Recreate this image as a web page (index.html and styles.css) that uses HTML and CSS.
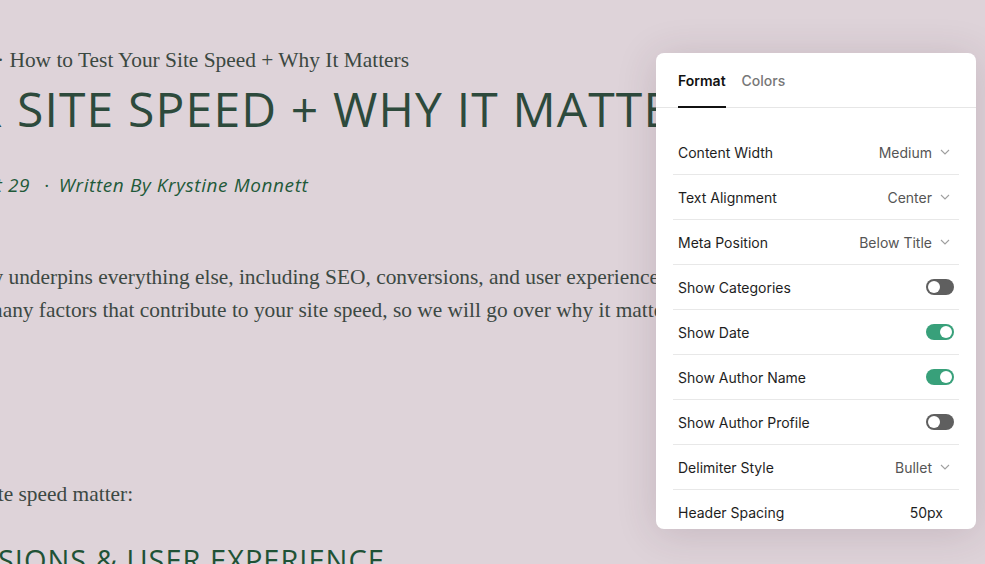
FILE: index.html
```html
<!DOCTYPE html>
<html lang="en">
<head>
<meta charset="utf-8">
<title>Blog post format</title>
<link rel="stylesheet" href="styles.css">
</head>
<body>
<main class="article">
  <div class="crumb">· How to Test Your Site Speed + Why It Matters</div>
  <h1 class="title">YOUR SITE SPEED + WHY IT MATTERS</h1>
  <div class="meta"><span>August 29</span><span class="dot">·</span><span>Written By Krystine Monnett</span></div>
  <div class="para">
    <div class="line l1">Site speed quietly underpins everything else, including SEO, conversions, and user experience. There are</div>
    <div class="line l2">many factors that contribute to your site speed, so we will go over why it matters and how to test it.</div>
  </div>
  <div class="para2">Why does site speed matter:</div>
  <h2 class="sub">CONVERSIONS &amp; USER EXPERIENCE</h2>
</main>

<aside class="panel">
  <div class="tabs">
    <div class="tab active">Format</div>
    <div class="tab">Colors</div>
  </div>
  <div class="rows">
    <div class="row"><span class="label">Content Width</span><span class="value">Medium<svg class="chev" viewBox="0 0 10 6" width="10" height="6"><path d="M1 1l4 4 4-4" fill="none" stroke="currentColor" stroke-width="1.1"/></svg></span></div>
    <div class="row"><span class="label">Text Alignment</span><span class="value">Center<svg class="chev" viewBox="0 0 10 6" width="10" height="6"><path d="M1 1l4 4 4-4" fill="none" stroke="currentColor" stroke-width="1.1"/></svg></span></div>
    <div class="row"><span class="label">Meta Position</span><span class="value">Below Title<svg class="chev" viewBox="0 0 10 6" width="10" height="6"><path d="M1 1l4 4 4-4" fill="none" stroke="currentColor" stroke-width="1.1"/></svg></span></div>
    <div class="row"><span class="label">Show Categories</span><span class="toggle"></span></div>
    <div class="row"><span class="label">Show Date</span><span class="toggle on"></span></div>
    <div class="row"><span class="label">Show Author Name</span><span class="toggle on"></span></div>
    <div class="row"><span class="label">Show Author Profile</span><span class="toggle"></span></div>
    <div class="row"><span class="label">Delimiter Style</span><span class="value">Bullet<svg class="chev" viewBox="0 0 10 6" width="10" height="6"><path d="M1 1l4 4 4-4" fill="none" stroke="currentColor" stroke-width="1.1"/></svg></span></div>
    <div class="row"><span class="label">Header Spacing</span><span class="value num">50px</span></div>
  </div>
</aside>
</body>
</html>
```

FILE: styles.css
```css
html, body {
  margin: 0;
  padding: 0;
  background: #ded3d9;
  width: 985px;
  height: 564px;
  overflow: hidden;
}

.article {
  padding-top: 47px;
  width: 985px;
  overflow: hidden;
}

.crumb {
  font-family: "Liberation Serif", serif;
  font-size: 21.4px;
  line-height: 26px;
  color: #3b4841;
  white-space: nowrap;
  margin-left: -3px;
}

.title {
  margin: 6px 0 0 -130px;
  font-family: "Open Sans", sans-serif;
  font-weight: 400;
  font-size: 48px;
  line-height: 60px;
  color: #2d4a3c;
  white-space: nowrap;
  letter-spacing: 1.15px;
}

.meta {
  margin: 34px 0 0 -58px;
  font-family: "Open Sans", sans-serif;
  font-style: italic;
  font-size: 19px;
  line-height: 24px;
  color: #1f5a3a;
  white-space: nowrap;
  letter-spacing: 0.6px;
}

.meta .dot {
  font-style: normal;
  margin: 0 9px 0 14px;
}

.para {
  margin-top: 64px;
  font-family: "Liberation Serif", serif;
  font-size: 21.4px;
  line-height: 33px;
  color: #3c4843;
}

.line {
  white-space: nowrap;
}

.l1 { margin-left: -149px; }
.l2 { margin-left: -14px; }

.para2 {
  margin: 151px 0 0 -108px;
  font-family: "Liberation Serif", serif;
  font-size: 21.4px;
  line-height: 33px;
  color: #3c4843;
  white-space: nowrap;
}

.sub {
  margin: 31px 0 0 -122px;
  font-family: "Open Sans", sans-serif;
  font-weight: 400;
  font-size: 29px;
  line-height: 36px;
  color: #1f5236;
  white-space: nowrap;
  letter-spacing: 1px;
}

/* Panel overlay */
.panel {
  position: absolute;
  left: 656px;
  top: 53px;
  width: 320px;
  height: 476px;
  background: #fff;
  border-radius: 8px;
  box-shadow: 0 4px 40px rgba(70, 40, 55, 0.16);
  overflow: hidden;
  font-family: "Inter", sans-serif;
  font-size: 14px;
  color: #1d1d1d;
}

.tabs {
  display: flex;
  gap: 16px;
  padding: 0 22px;
  height: 54px;
  border-bottom: 1px solid #e6e6e6;
}

.tab {
  display: flex;
  align-items: center;
  padding-top: 2px;
  color: #777;
  font-weight: 500;
  border-bottom: 2px solid transparent;
  margin-bottom: -1px;
}

.tab.active {
  color: #111;
  font-weight: 600;
  border-bottom-color: #111;
}

.rows {
  margin: 22px 17px 0 17px;
}

.row {
  display: flex;
  align-items: center;
  justify-content: space-between;
  height: 44px;
  padding: 0 5px;
  border-bottom: 1px solid #e8e8e8;
}

.label {
  color: #1e1e1e;
}

.value {
  display: flex;
  align-items: center;
  gap: 8px;
  color: #555;
}

.value.num {
  color: #1e1e1e;
  padding-right: 11px;
}

.chev {
  color: #a0a0a0;
  margin-right: 4px;
}

.toggle {
  position: relative;
  width: 28px;
  height: 16px;
  border-radius: 8px;
  background: #5f5f5f;
}

.toggle::after {
  content: "";
  position: absolute;
  top: 2px;
  left: 2px;
  width: 12px;
  height: 12px;
  border-radius: 50%;
  background: #fff;
}

.toggle.on {
  background: #38a07a;
}

.toggle.on::after {
  left: 14px;
}
```
